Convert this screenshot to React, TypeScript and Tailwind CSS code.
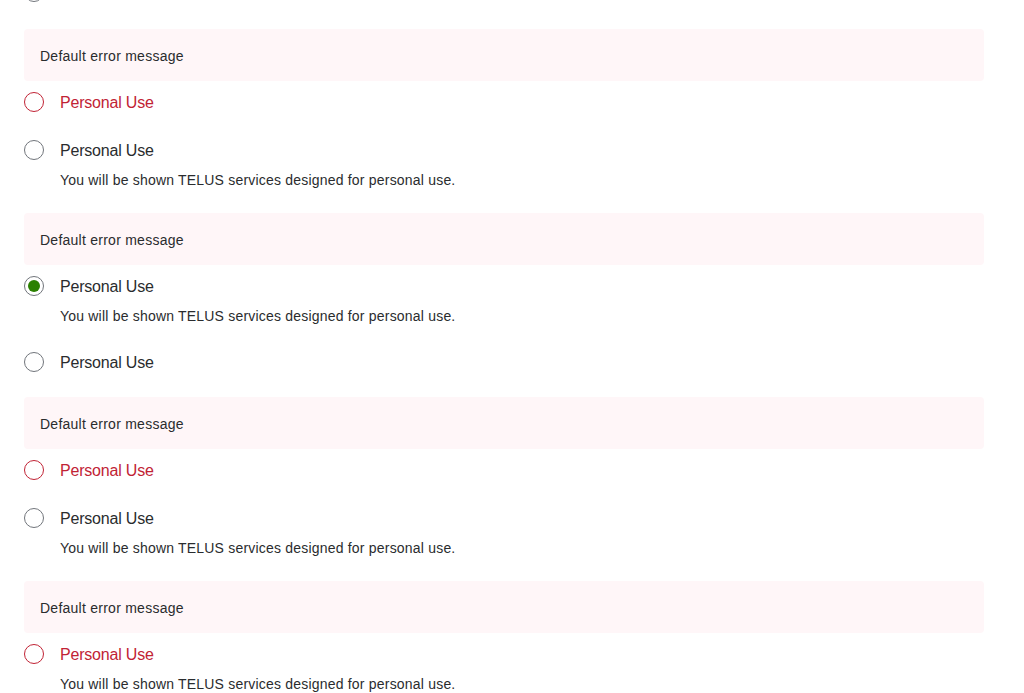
type Variant = 'normal' | 'error' | 'checked';

const font = { fontFamily: '"Liberation Sans", Arial, sans-serif' };

function Circle({ variant }: { variant: Variant }) {
  const ring = variant === 'error' ? 'border-[#c12335]' : 'border-[#71757b]';
  return (
    <span
      className={`w-5 h-5 rounded-full border ${ring} bg-white flex items-center justify-center shrink-0`}
    >
      {variant === 'checked' && <span className="w-3 h-3 rounded-full bg-[#2b8000]" />}
    </span>
  );
}

function Radio({ variant, desc }: { variant: Variant; desc?: boolean }) {
  return (
    <div className="flex flex-col">
      <div className="flex items-center h-6">
        <Circle variant={variant} />
        <span
          className={`ml-4 pt-px text-base leading-6 tracking-[-0.2px] ${variant === 'error' ? 'text-[#c12335]' : 'text-[#2a2c2e]'}`}
        >
          Personal Use
        </span>
      </div>
      {desc && (
        <p className="mt-2 ml-9 text-sm leading-5 tracking-[0.2px] text-[#2a2c2e]">
          You will be shown TELUS services designed for personal use.
        </p>
      )}
    </div>
  );
}

function ErrorBox() {
  return (
    <div className="h-[52px] rounded bg-[#fff6f8] px-4 pt-px flex items-center text-sm tracking-[0.25px] text-[#2a2c2e]">
      Default error message
    </div>
  );
}

function Group({ children }: { children: React.ReactNode }) {
  return (
    <div className="flex flex-col mb-[23px]">
      <ErrorBox />
      <div className="flex flex-col gap-6 mt-[9px]">{children}</div>
    </div>
  );
}

export default function App() {
  return (
    <div className="w-[1024px] h-[693px] overflow-hidden bg-white" style={font}>
      <div className="w-[960px] ml-6">
        <div className="h-[29px] overflow-hidden flex flex-col justify-end">
          <div className="mb-[27px]">
            <Circle variant="normal" />
          </div>
        </div>
        <Group>
          <Radio variant="error" />
          <Radio variant="normal" desc />
        </Group>
        <Group>
          <Radio variant="checked" desc />
          <Radio variant="normal" />
        </Group>
        <Group>
          <Radio variant="error" />
          <Radio variant="normal" desc />
        </Group>
        <Group>
          <Radio variant="error" desc />
        </Group>
      </div>
    </div>
  );
}
